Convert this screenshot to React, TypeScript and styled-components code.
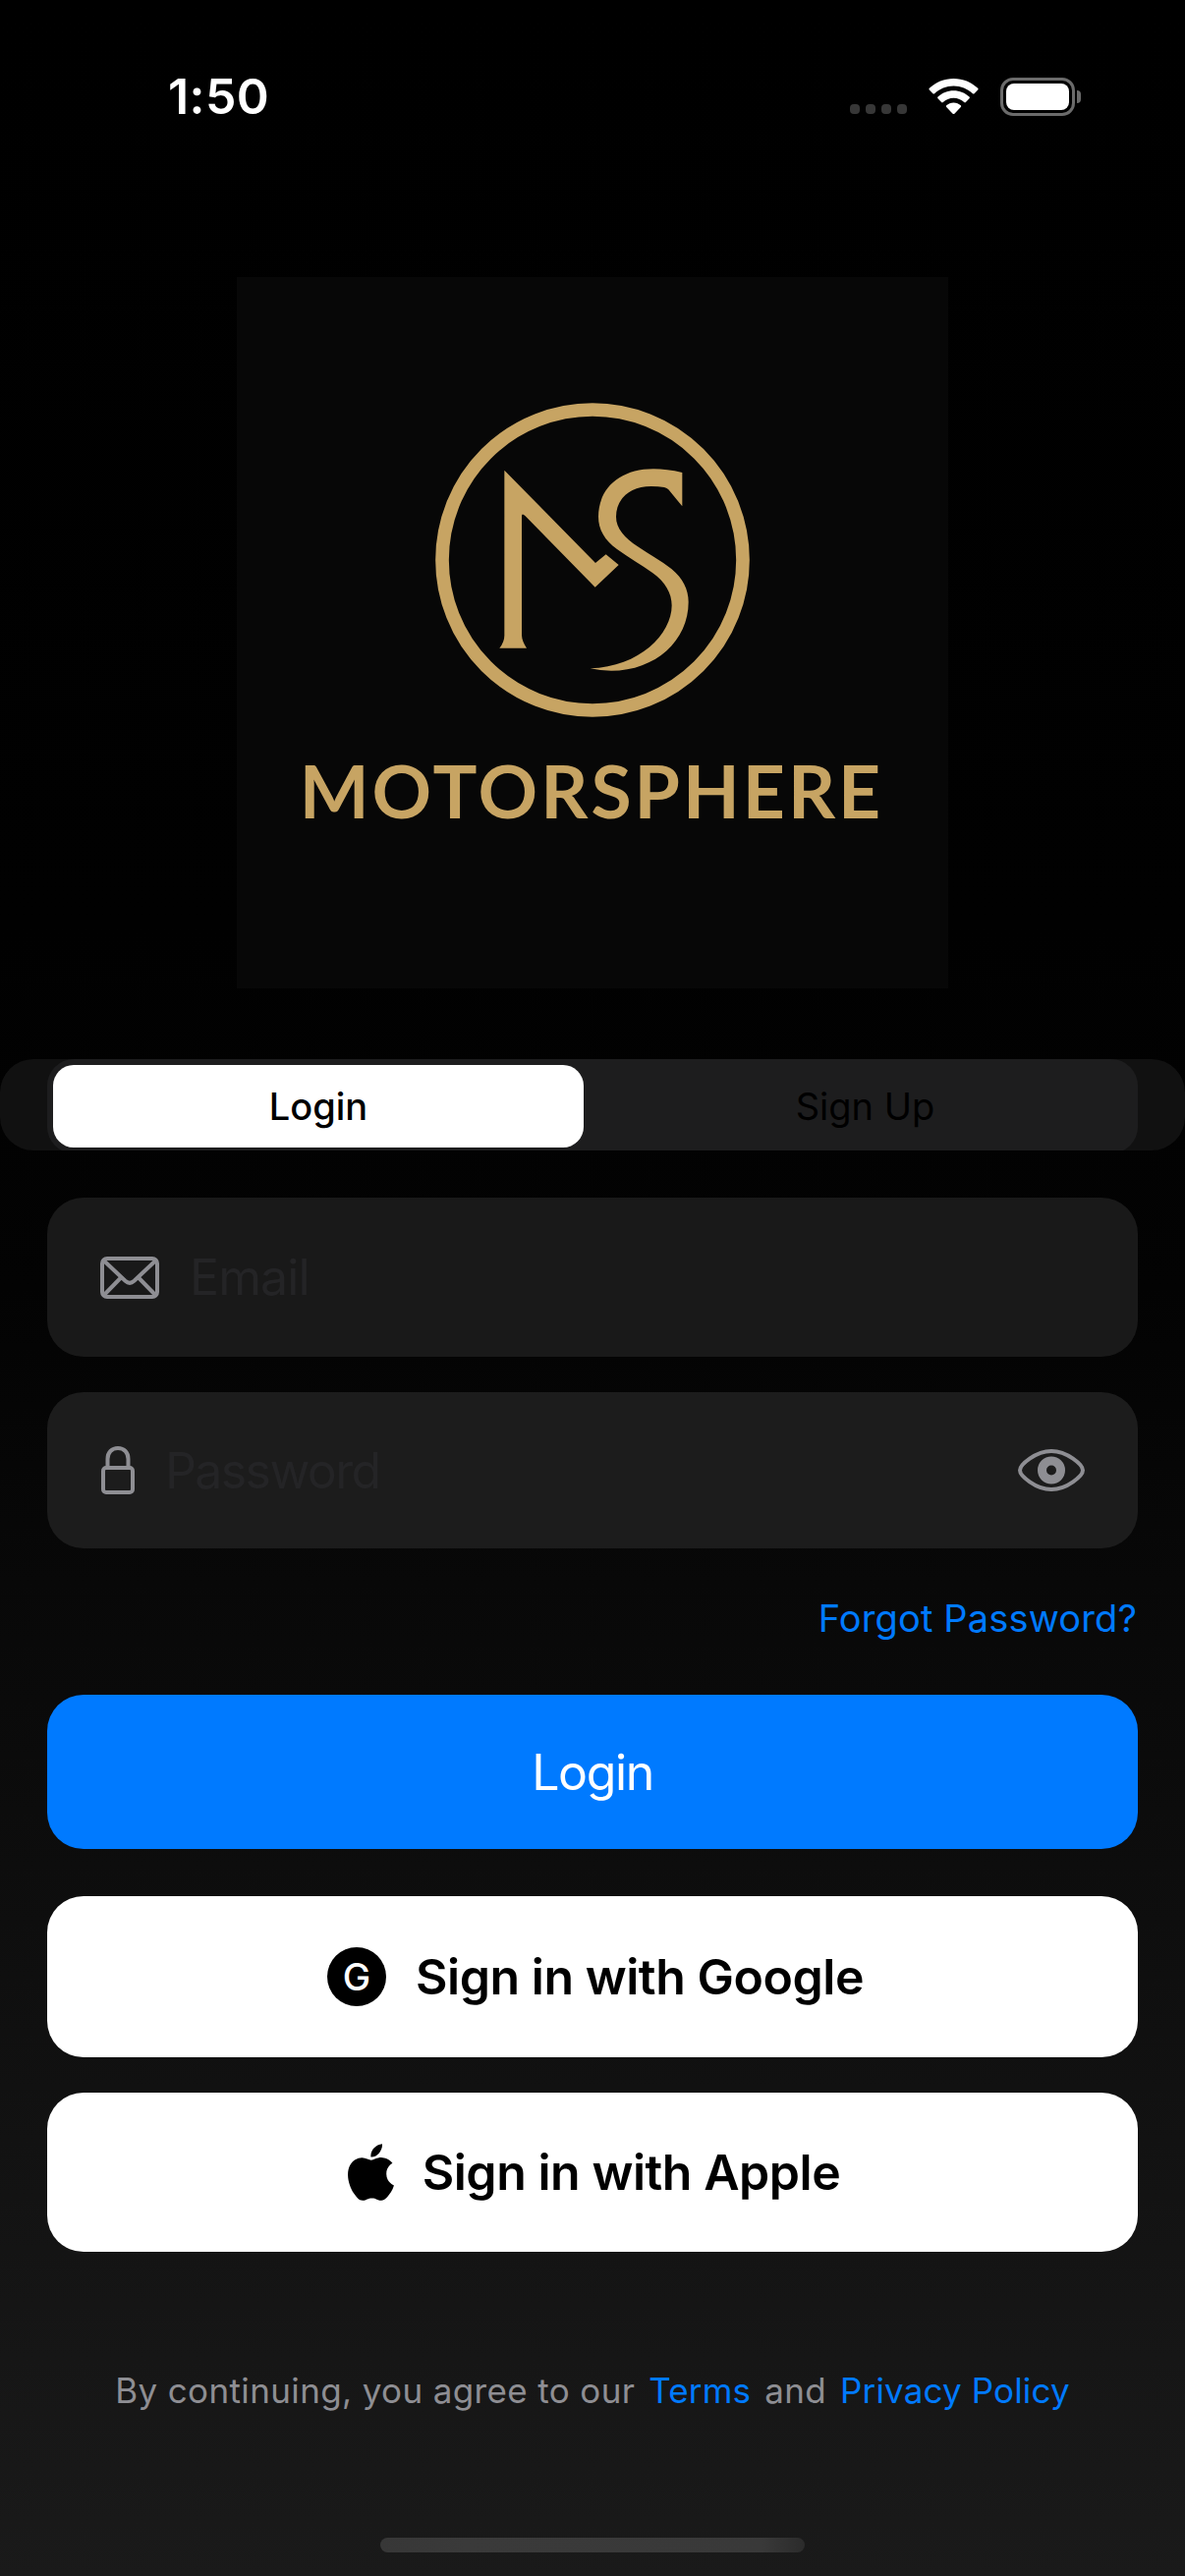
import React from "react";
import styled, { createGlobalStyle } from "styled-components";

const GlobalStyle = createGlobalStyle`
  *, *::before, *::after { box-sizing: border-box; }
  html, body { margin: 0; padding: 0; background: #000; }
  body { font-family: Inter, "Liberation Sans", sans-serif; -webkit-font-smoothing: antialiased; }
  button, input { font: inherit; border: 0; margin: 0; padding: 0; background: none; outline: 0; }
  svg { display: block; flex: none; }
`;

const Screen = styled.main`
  width: 1206px;
  height: 2622px;
  display: flex;
  flex-direction: column;
  overflow: hidden;
  background: linear-gradient(180deg, #000 0%, #010101 36%, #030303 50%, #0a0a0a 66%, #111 81%, #1a1a1a 100%);
`;

const StatusBar = styled.header`
  height: 196px;
  display: flex;
  justify-content: space-between;
  align-items: center;
  padding: 0 106px 0 171px;
`;

const Clock = styled.time`
  color: #fff;
  font-size: 50px;
  font-weight: 600;
  letter-spacing: 0.4px;
`;

const StatusIcons = styled.div`
  display: flex;
  align-items: center;
`;

const SignalDots = styled.div`
  display: flex;
  gap: 6px;
  margin: 26px 22px 0 0;
`;

const SignalDot = styled.i`
  width: 10px;
  height: 10px;
  border-radius: 4px;
  background: #373737;
`;

const Battery = styled.div`
  width: 76px;
  height: 39px;
  margin-left: 22px;
  padding: 3px;
  border: 3px solid #6b6b6b;
  border-radius: 13px;
`;

const BatteryLevel = styled.div`
  height: 100%;
  border-radius: 8px;
  background: #fff;
`;

const BatteryCap = styled.i`
  width: 4px;
  height: 13px;
  margin-left: 2px;
  border-radius: 0 4px 4px 0;
  background: #6b6b6b;
`;

const Brand = styled.section`
  width: 724px;
  height: 724px;
  margin: 86px auto 0;
  display: flex;
  flex-direction: column;
  align-items: center;
  padding-top: 128px;
  background: #070707;
`;

const Wordmark = styled.h1`
  margin: 29px 2px 0 0;
  font-family: Lato, "Open Sans", sans-serif;
  font-weight: 700;
  font-size: 75px;
  line-height: 90px;
  letter-spacing: 3px;
  color: #c7a463;
  white-space: nowrap;
`;

const SegmentStrip = styled.div`
  height: 93px;
  margin-top: 72px;
  padding: 0 48px;
  border-radius: 34px;
  background: #111;
  overflow: hidden;
  flex: none;
`;

const Segments = styled.div`
  height: 96px;
  padding: 6px 0 6px 6px;
  display: flex;
  justify-content: space-between;
  border-radius: 27px;
  background: #1d1d1e;
`;

const Segment = styled.button<{ $active?: boolean }>`
  width: ${(p) => (p.$active ? 540 : 555)}px;
  height: 84px;
  border-radius: 21px;
  background: ${(p) => (p.$active ? "#fff" : "transparent")};
  color: #000;
  font-size: 38px;
  line-height: 84px;
  font-weight: ${(p) => (p.$active ? 500 : 400)};
  letter-spacing: 0;
`;

const Form = styled.form`
  display: flex;
  flex-direction: column;
  padding: 48px 48px 0;
`;

const Field = styled.label<{ $height: number; $tone: string; $inset: number }>`
  height: ${(p) => p.$height}px;
  display: flex;
  align-items: center;
  padding: 0 54px 0 ${(p) => p.$inset}px;
  border-radius: 37px;
  background: ${(p) => p.$tone};
  & + & { margin-top: 36px; }
`;

const Input = styled.input<{ $tracking: number }>`
  flex: 1;
  min-width: 0;
  height: 66px;
  margin-left: 31px;
  font-size: 50px;
  letter-spacing: ${(p) => p.$tracking}px;
  color: #fff;
  &::placeholder { color: #242426; opacity: 1; }
`;

const Forgot = styled.a`
  align-self: flex-end;
  height: 48px;
  margin: 47px 1px 0 0;
  font-size: 38px;
  line-height: 48px;
  letter-spacing: 0.15px;
  color: #007aff;
`;

const Action = styled.button<{ $height: number; $top: number; $primary?: boolean; $shift?: number }>`
  height: ${(p) => p.$height}px;
  margin-top: ${(p) => p.$top}px;
  padding-left: ${(p) => p.$shift ?? 0}px;
  display: flex;
  align-items: center;
  justify-content: center;
  border-radius: 37px;
  background: ${(p) => (p.$primary ? "#007aff" : "#fff")};
  color: ${(p) => (p.$primary ? "#fff" : "#000")};
  font-size: 50px;
  font-weight: ${(p) => (p.$primary ? 400 : 600)};
  letter-spacing: ${(p) => (p.$primary ? -1.4 : -0.45)}px;
`;

const GoogleBadge = styled.span`
  width: 60px;
  height: 60px;
  margin-right: 30px;
  border-radius: 50%;
  background: #000;
  color: #fff;
  font-size: 38px;
  font-weight: 550;
  line-height: 60px;
  letter-spacing: 0;
  text-align: center;
`;

const AppleMark = styled.svg`
  margin-right: 29px;
`;

const Legal = styled.footer`
  margin-top: 117px;
  height: 48px;
  display: flex;
  gap: 14px;
  justify-content: center;
  font-size: 35px;
  line-height: 48px;
  letter-spacing: 0.37px;
  color: #8e8e93;
  white-space: nowrap;
  a { color: #007aff; letter-spacing: 0.15px; }
`;

const HomeIndicator = styled.div`
  width: 432px;
  height: 15px;
  margin: 126px auto 0;
  border-radius: 8px;
  background: linear-gradient(90deg, #373737 0%, #3a3a3a 20%, #393939 90%, #2b2b2b 100%);
`;

const WifiIcon = () => (
  <svg width="51" height="37" viewBox="0 0 51 37" fill="#fff">
    <path d="M25.5 0C35 0 43.7 3.7 50.2 9.8c.5.5.5 1.2 0 1.7l-3.6 3.7c-.5.5-1.2.5-1.7 0C39.700 10.400 32.900 7.500 25.500 7.500S11.300 10.400 6.100 15.200c-.5.5-1.200.5-1.700 0L.8 11.500c-.5-.5-.5-1.200 0-1.700C7.300 3.700 16 0 25.500 0z" />
    <path d="M25.500 12.300c6.200 0 11.800 2.400 16 6.300.5.500.5 1.200 0 1.700l-3.600 3.700c-.5.500-1.200.5-1.700 0-2.800-2.600-6.600-4.200-10.700-4.200s-7.900 1.600-10.700 4.200c-.5.500-1.200.5-1.700 0l-3.600-3.700c-.5-.5-.5-1.200 0-1.700 4.200-3.900 9.800-6.300 16-6.300z" />
    <path d="M25.500 24.500c2.800 0 5.400 1.100 7.300 2.800.5.500.5 1.200 0 1.700l-6.400 6.700c-.5.500-1.300.5-1.800 0L18.200 29c-.5-.5-.5-1.200 0-1.700 1.900-1.700 4.500-2.800 7.300-2.800z" />
  </svg>
);

const Emblem = () => (
  <svg width="320" height="320" viewBox="69 60 960 960" fill="#c7a463">
    <circle cx="549" cy="540" r="459" fill="none" stroke="#c7a463" strokeWidth="41" />
    <path d="M280 266 558 549l32-26 39 32-72 68L344 406q-11-11-11 0v364q1 18 15 39h-83q15-19 15-39z" />
    <path d="M823 273v103l-42-51q-4-5-13-7-18-3-40-3c-65 0-107 38-107 93 0 36 26 64 66 91 35 24 71 43 103 68 35 29 52 63 52 101 0 117-100 210-236 210q-34 0-64-7c150-4 249-105 249-192 0-38-20-72-59-100-34-24-72-46-108-72-38-28-57-60-57-99 0-85 64-146 168-146q42 0 88 11z" />
  </svg>
);

const MailIcon = () => (
  <svg width="60" height="43" viewBox="0 0 60 43" fill="none" stroke="#8e8e93" strokeWidth="4">
    <rect x="2" y="2" width="56" height="39" rx="5" />
    <path d="M3.500 4 25.500 24.800q4.500 4 9 0L56.500 4M3.500 39.500 21.500 21M56.500 39.500 38.500 21" />
  </svg>
);

const LockIcon = () => (
  <svg width="34" height="49" viewBox="0 0 34 49" fill="none" stroke="#8e8e93" strokeWidth="4">
    <rect x="2" y="22" width="30" height="25" rx="3" />
    <path d="M6.500 22V13C6.500 6.300 10.800 2 17 2s10.500 4.300 10.500 11v9" />
  </svg>
);

const EyeIcon = () => (
  <svg width="68" height="43" viewBox="0 0 68 43">
    <path d="M34 2C50 2 66 16 66 21.500S50 41 34 41 2 27 2 21.500 18 2 34 2z" fill="none" stroke="#8e8e93" strokeWidth="4" />
    <circle cx="34" cy="21.500" r="9.500" fill="none" stroke="#8e8e93" strokeWidth="9" />
  </svg>
);

export default function App() {
  return (
    <>
      <GlobalStyle />
      <Screen>
        <StatusBar>
          <Clock>1:50</Clock>
          <StatusIcons>
            <SignalDots>
              <SignalDot />
              <SignalDot />
              <SignalDot />
              <SignalDot />
            </SignalDots>
            <WifiIcon />
            <Battery>
              <BatteryLevel />
            </Battery>
            <BatteryCap />
          </StatusIcons>
        </StatusBar>

        <Brand>
          <Emblem />
          <Wordmark>MOTORSPHERE</Wordmark>
        </Brand>

        <SegmentStrip>
          <Segments>
            <Segment $active>Login</Segment>
            <Segment>Sign Up</Segment>
          </Segments>
        </SegmentStrip>

        <Form>
          <Field $height={162} $tone="#191919" $inset={54}>
            <MailIcon />
            <Input $tracking={-0.9} type="email" placeholder="Email" />
          </Field>
          <Field $height={159} $tone="#1c1c1c" $inset={55}>
            <LockIcon />
            <Input $tracking={-1.6} type="password" placeholder="Password" />
            <EyeIcon />
          </Field>
          <Forgot>Forgot Password?</Forgot>
          <Action type="button" $primary $height={157} $top={54}>
            Login
          </Action>
          <Action type="button" $height={164} $top={48} $shift={6}>
            <GoogleBadge>G</GoogleBadge>
            Sign in with Google
          </Action>
          <Action type="button" $height={162} $top={36} $shift={3}>
            <AppleMark width="47" height="58" viewBox="2.2 0 19.6 24">
              <path d="M12.152 6.896c-.948 0-2.415-1.078-3.960-1.040-2.040.027-3.910 1.183-4.961 3.014-2.117 3.675-.546 9.103 1.519 12.090 1.013 1.454 2.208 3.090 3.792 3.039 1.520-.065 2.090-.987 3.935-.987 1.831 0 2.350.987 3.960.948 1.637-.026 2.676-1.480 3.676-2.948 1.156-1.688 1.636-3.325 1.662-3.415-.039-.013-3.182-1.221-3.220-4.857-.026-3.040 2.480-4.494 2.597-4.559-1.429-2.090-3.623-2.324-4.390-2.376-2-.156-3.675 1.090-4.610 1.090zM15.530 3.830c.843-1.012 1.400-2.427 1.245-3.830-1.207.052-2.662.805-3.532 1.818-.780.896-1.454 2.338-1.273 3.714 1.338.104 2.715-.688 3.559-1.701" />
            </AppleMark>
            Sign in with Apple
          </Action>
        </Form>

        <Legal>
          <span>By continuing, you agree to our</span>
          <a>Terms</a>
          <span>and</span>
          <a>Privacy Policy</a>
        </Legal>
        <HomeIndicator />
      </Screen>
    </>
  );
}
